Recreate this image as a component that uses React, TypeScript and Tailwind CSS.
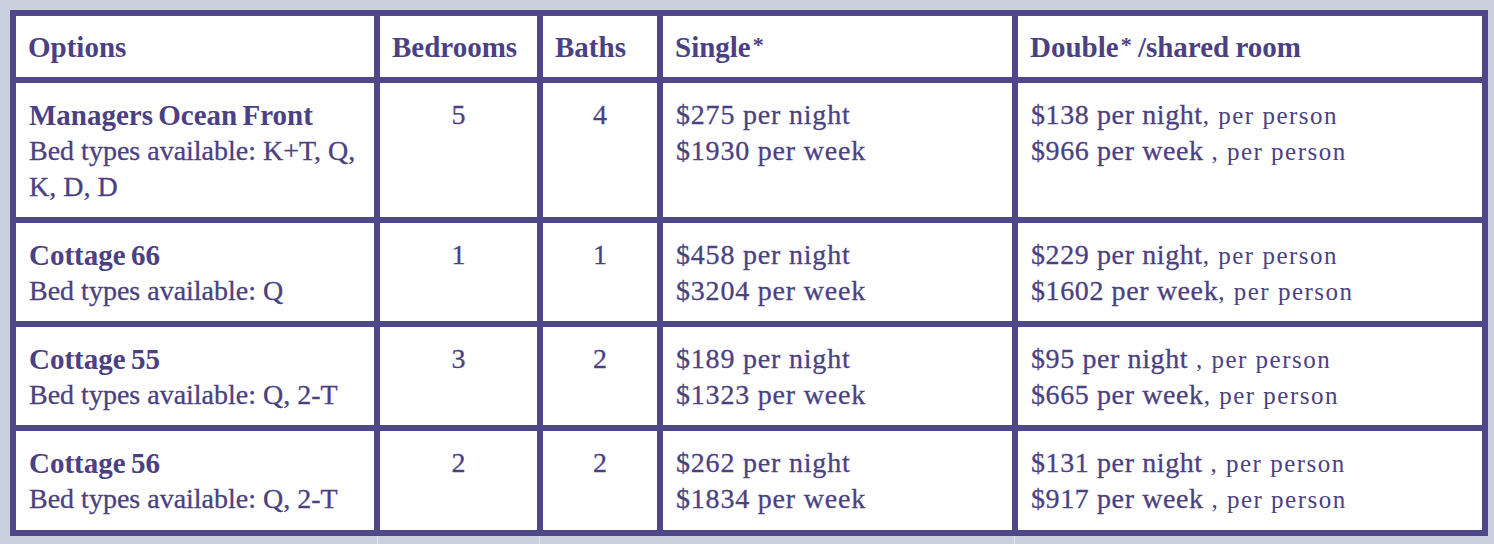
const rows = [
  {
    name: "Managers Ocean Front",
    beds: "Bed types available: K+T, Q, K, D, D",
    bedrooms: "5",
    baths: "4",
    single: ["$275 per night", "$1930 per week"],
    double: [
      ["$138 per night", ", per person"],
      ["$966 per week", " , per person"],
    ],
  },
  {
    name: "Cottage 66",
    beds: "Bed types available: Q",
    bedrooms: "1",
    baths: "1",
    single: ["$458 per night", "$3204 per week"],
    double: [
      ["$229 per night", ", per person"],
      ["$1602 per week", ", per person"],
    ],
  },
  {
    name: "Cottage 55",
    beds: "Bed types available: Q, 2-T",
    bedrooms: "3",
    baths: "2",
    single: ["$189 per night", "$1323 per week"],
    double: [
      ["$95 per night", " , per person"],
      ["$665 per week", ", per person"],
    ],
  },
  {
    name: "Cottage 56",
    beds: "Bed types available: Q, 2-T",
    bedrooms: "2",
    baths: "2",
    single: ["$262 per night", "$1834 per week"],
    double: [
      ["$131 per night", " , per person"],
      ["$917 per week", " , per person"],
    ],
  },
]

const head = "bg-white px-[12px] pt-[13px] pb-[12px] text-left align-top font-bold text-[29px] [word-spacing:-1px]"
const cell = "bg-white px-[13px] pt-[14px] pb-[12px] align-top"
const star = "relative -top-[5px] ml-[2px] text-[22px] leading-none"

export default function App() {
  return (
    <div className="min-h-screen w-[1494px] bg-[#cbd0de] pl-[10px] pt-[10px] font-['Liberation_Serif',serif] text-[28px] leading-[36px] text-[#4b4182]">
      <table className="table-fixed w-[1478px] border-separate border-spacing-[6px] bg-[#50468a]">
        <colgroup>
          <col className="w-[358px]" />
          <col className="w-[157px]" />
          <col className="w-[114px]" />
          <col className="w-[349px]" />
          <col className="w-[464px]" />
        </colgroup>
        <thead>
          <tr>
            <th className={head}>Options</th>
            <th className={head}>Bedrooms</th>
            <th className={head}>Baths</th>
            <th className={head}>Single<span className={star}>*</span></th>
            <th className={head}>
              Double<span className={star}>*</span> /shared room
            </th>
          </tr>
        </thead>
        <tbody className="[-webkit-text-stroke:0.3px_#4b4182]">
          {rows.map((r) => (
            <tr key={r.name} className="last:h-[99px]">
              <td className={cell}>
                <div className="font-bold text-[29px] [word-spacing:-2px] [-webkit-text-stroke:0px]">{r.name}</div>
                <div>{r.beds}</div>
              </td>
              <td className={`${cell} text-center`}>{r.bedrooms}</td>
              <td className={`${cell} text-center`}>{r.baths}</td>
              <td className={`${cell} tracking-[0.8px]`}>
                {r.single.map((s) => (
                  <div key={s}>{s}</div>
                ))}
              </td>
              <td className={cell}>
                {r.double.map(([a, b]) => (
                  <div key={a} className="whitespace-pre tracking-[0.6px]">
                    {a}
                    <span className="text-[25px] leading-none tracking-[1.5px] [-webkit-text-stroke:0px]">{b}</span>
                  </div>
                ))}
              </td>
            </tr>
          ))}
        </tbody>
      </table>
      <div className="flex h-[9px]">
        <div className="w-[367px]" />
        <div className="w-px bg-[#e2e4ed]" />
        <div className="w-[161px]" />
        <div className="w-px bg-[#e2e4ed]" />
        <div className="w-[474px]" />
        <div className="w-px bg-[#e2e4ed]" />
      </div>
    </div>
  )
}
